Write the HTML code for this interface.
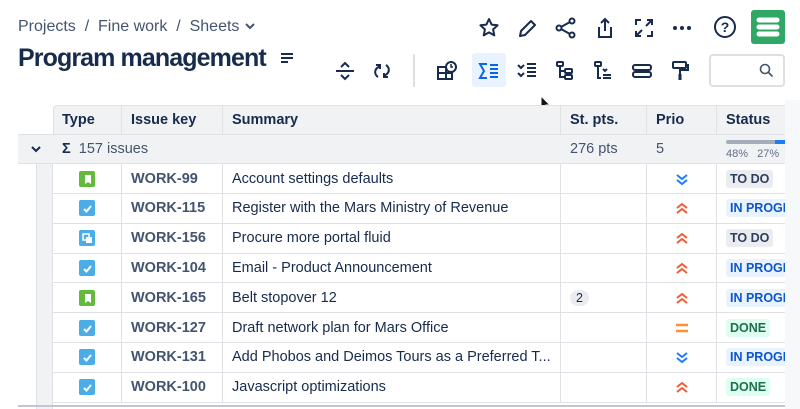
<!DOCTYPE html><html><head><style>
*{box-sizing:border-box;margin:0;padding:0}
body{width:800px;height:409px;overflow:hidden;background:#fff;font-family:"Liberation Sans",sans-serif;position:relative;color:#172b4d}
.a{position:absolute}
.ic{position:absolute;width:24px;height:24px}
.cell{position:absolute;height:30px;display:flex;align-items:center;font-size:14.5px;border-right:1px solid #dfe1e6;border-bottom:1px solid #dfe1e6}
.key{color:#44546f;font-weight:bold}
.lz{font-size:12.5px;font-weight:bold;padding:2px 4px;border-radius:3px;white-space:nowrap}
.todo{background:#ebecf0;color:#2c3e5d}.prog{background:#e9f2ff;color:#0c55cf}.done{background:#dcfff1;color:#216e4e}
</style></head><body>
<div class="a" style="left:18px;top:18px;font-size:16px;color:#44546f">Projects &nbsp;/&nbsp; Fine work &nbsp;/&nbsp; Sheets <svg width="12" height="10"><path d="M2 3l4 4 4-4" stroke="#44546f" stroke-width="2" fill="none"/></svg></div>
<div class="a" style="left:18px;top:44px;font-size:25px;font-weight:bold;color:#172b4d;letter-spacing:-0.9px;white-space:nowrap">Program management</div>
<svg class="a" style="left:280px;top:52px" width="14" height="12"><path d="M1 2h12M1 6h12M1 10h7" stroke="#172b4d" stroke-width="2"/></svg>
<svg class="ic" style="left:477px;top:16px" viewBox="0 0 24 24"><path d="M12 3l2.6 5.6 6 .7-4.5 4.1 1.2 6L12 16.4 6.7 19.4l1.2-6L3.4 9.3l6-.7z" fill="none" stroke="#172b4d" stroke-width="2" stroke-linejoin="round"/></svg>
<svg class="ic" style="left:516px;top:16px" viewBox="0 0 24 24"><path d="M4 20l1-5L15 5l4 4L9 19z" fill="none" stroke="#172b4d" stroke-width="2" stroke-linejoin="round"/></svg>
<svg class="ic" style="left:554px;top:16px" viewBox="0 0 24 24"><circle cx="18" cy="5" r="2.5" fill="none" stroke="#172b4d" stroke-width="2"/><circle cx="5" cy="12" r="2.5" fill="none" stroke="#172b4d" stroke-width="2"/><circle cx="18" cy="19" r="2.5" fill="none" stroke="#172b4d" stroke-width="2"/><path d="M7 11l9-5M7 13l9 5" stroke="#172b4d" stroke-width="2"/></svg>
<svg class="ic" style="left:593px;top:16px" viewBox="0 0 24 24"><path d="M12 15V3M8 7l4-4 4 4M6 11v10h12V11" fill="none" stroke="#172b4d" stroke-width="2"/></svg>
<svg class="ic" style="left:632px;top:16px" viewBox="0 0 24 24"><path d="M4 9V4h5M15 4h5v5M20 15v5h-5M9 20H4v-5M5 19l5-5M19 5l-5 5" fill="none" stroke="#172b4d" stroke-width="2"/></svg>
<svg class="ic" style="left:670px;top:16px" viewBox="0 0 24 24"><circle cx="5" cy="12" r="2" fill="#172b4d"/><circle cx="12" cy="12" r="2" fill="#172b4d"/><circle cx="19" cy="12" r="2" fill="#172b4d"/></svg>
<svg class="ic" style="left:713px;top:15px" viewBox="0 0 24 24"><circle cx="12" cy="12" r="10" fill="none" stroke="#172b4d" stroke-width="2"/><text x="12" y="17" font-size="14" font-weight="bold" text-anchor="middle" fill="#172b4d" font-family="Liberation Sans">?</text></svg>
<div class="a" style="left:751px;top:10px;width:34px;height:34px;background:#2fa866;border-radius:3px"><svg width="34" height="34"><path d="M8 10h18M8 17h18M8 24h18" stroke="#fff" stroke-width="5" stroke-linecap="round"/></svg></div>
<svg class="ic" style="left:333px;top:59px" viewBox="0 0 24 24"><path d="M3 12h18M8 8l4-4 4 4M8 16l4 4 4-4" fill="none" stroke="#172b4d" stroke-width="2"/></svg>
<svg class="ic" style="left:370px;top:59px" viewBox="0 0 24 24"><path d="M8 18c-3-2-4-6-1-9l3-2M6 6h4v4M16 6c3 2 4 6 1 9l-3 2M18 18h-4v-4" fill="none" stroke="#172b4d" stroke-width="2"/></svg>
<div class="a" style="left:413px;top:54px;width:2px;height:33px;background:#dcdfe4"></div>
<svg class="ic" style="left:435px;top:59px" viewBox="0 0 24 24"><path d="M3 8h8v12H3zM3 14h14v6H11" fill="none" stroke="#172b4d" stroke-width="2"/><circle cx="16" cy="8" r="5" fill="#fff" stroke="#172b4d" stroke-width="2"/><path d="M16 5v3h2" stroke="#172b4d" stroke-width="1.5" fill="none"/></svg>
<div class="a" style="left:472px;top:53px;width:34px;height:34px;background:#e9f2ff;border-radius:3px"></div>
<svg class="ic" style="left:477px;top:59px" viewBox="0 0 24 24"><path d="M10 5H3l4 7-4 7h7M13 6h8M13 10h8M13 14h8M13 18h8" fill="none" stroke="#0c66e4" stroke-width="2"/></svg>
<svg class="ic" style="left:515px;top:59px" viewBox="0 0 24 24"><path d="M3 6l3 3 3-3M3 14l3 3 3-3M12 5h9M12 9h9M12 13h9M12 17h9" fill="none" stroke="#172b4d" stroke-width="2"/></svg>
<svg class="ic" style="left:553px;top:59px" viewBox="0 0 24 24"><rect x="4" y="3" width="6" height="4" rx="1" fill="none" stroke="#172b4d" stroke-width="2"/><path d="M7 7v11h4M7 12h4" fill="none" stroke="#172b4d" stroke-width="2"/><rect x="12" y="10" width="7" height="4" rx="1" fill="none" stroke="#172b4d" stroke-width="2"/><rect x="12" y="16" width="7" height="4" rx="1" fill="none" stroke="#172b4d" stroke-width="2"/></svg>
<svg class="ic" style="left:591px;top:59px" viewBox="0 0 24 24"><rect x="4" y="3" width="6" height="4" rx="1" fill="none" stroke="#172b4d" stroke-width="2"/><path d="M7 7v12h3M12 10l2 2 2-2M12 16h8M12 19h8" fill="none" stroke="#172b4d" stroke-width="2"/></svg>
<svg class="ic" style="left:630px;top:59px" viewBox="0 0 24 24"><rect x="3" y="6" width="18" height="5" rx="2" fill="none" stroke="#172b4d" stroke-width="2"/><rect x="3" y="13" width="18" height="5" rx="2" fill="none" stroke="#172b4d" stroke-width="2"/></svg>
<svg class="ic" style="left:668px;top:59px" viewBox="0 0 24 24"><rect x="5" y="3" width="13" height="6" rx="1" fill="none" stroke="#172b4d" stroke-width="2"/><path d="M18 6h2v5h-8v4" fill="none" stroke="#172b4d" stroke-width="2"/><rect x="10.5" y="15" width="3" height="6" fill="#172b4d"/></svg>
<div class="a" style="left:709px;top:54px;width:76px;height:33px;border:2px solid #dcdfe4;border-radius:4px"></div>
<svg class="a" style="left:759px;top:63px" width="15" height="15"><circle cx="6" cy="6" r="4.5" fill="none" stroke="#44546f" stroke-width="1.6"/><path d="M9.5 9.5l4 4" stroke="#44546f" stroke-width="1.6"/></svg>
<svg class="a" style="left:540px;top:95px" width="12" height="18"><path d="M1 1v13l3-3 3 6 2-1-3-6h4z" fill="#111" stroke="#fff" stroke-width="1"/></svg>
<div class="a" style="left:53px;top:105px;width:740px;height:29px;background:#f1f2f4;border-top:1px solid #dfe1e6;border-left:1px solid #dfe1e6;border-radius:4px 0 0 0"></div>
<div class="a" style="left:18px;top:134px;width:775px;height:30px;background:#f1f2f4;border-top:1px solid #dfe1e6;border-bottom:1px solid #dfe1e6"></div>
<div class="a" style="left:36px;top:164px;width:17px;height:245px;background:#f1f2f4;border-left:1px solid #dfe1e6;border-right:1px solid #dfe1e6"></div>
<div id="hd"></div>
<div class="a" style="left:785px;top:100px;width:15px;height:309px;background:#f7f8f9"></div>
<div class="a" style="left:18px;top:405px;width:767px;height:2px;background:#c1c7d0"></div>
<script>
var cols=[[53,122],[122,223],[223,561],[561,647],[647,717],[717,800]];
var h=['Type','Issue key','Summary','St. pts.','Prio','Status'];
var o='';
h.forEach(function(t,i){o+='<div class="cell" style="left:'+cols[i][0]+'px;top:105px;width:'+(cols[i][1]-cols[i][0])+'px;height:29px;padding-left:9px;font-weight:bold;font-size:14.5px;border-bottom:none">'+t+'</div>';});
o+='<svg class="a" style="left:30px;top:144px" width="12" height="10"><path d="M2 3l4 4 4-4" stroke="#172b4d" stroke-width="2" fill="none"/></svg>';
o+='<div class="a" style="left:62px;top:141px;font-size:14.5px;color:#44546f"><b style="color:#172b4d">&Sigma;</b>&nbsp; 157 issues</div>';
o+='<div class="a" style="left:570px;top:141px;font-size:14.5px;color:#44546f">276 pts</div>';
o+='<div class="a" style="left:656px;top:141px;font-size:14.5px;color:#44546f">5</div>';
o+='<div class="a" style="left:726px;top:140px;width:70px;height:4px;background:#a5adba;border-radius:2px"></div><div class="a" style="left:775px;top:140px;width:20px;height:4px;background:#1d7afc"></div>';
o+='<div class="a" style="left:726px;top:148px;font-size:11px;color:#626f86">48% &nbsp;&nbsp;27%</div>';
var rows=[['s','WORK-99','Account settings defaults','','d','todo','TO DO'],['t','WORK-115','Register with the Mars Ministry of Revenue','','h','prog','IN PROGRESS'],['u','WORK-156','Procure more portal fluid','','h','todo','TO DO'],['t','WORK-104','Email - Product Announcement','','h','prog','IN PROGRESS'],['s','WORK-165','Belt stopover 12','2','h','prog','IN PROGRESS'],['t','WORK-127','Draft network plan for Mars Office','','m','done','DONE'],['t','WORK-131','Add Phobos and Deimos Tours as a Preferred T...','','d','prog','IN PROGRESS'],['t','WORK-100','Javascript optimizations','','h','done','DONE']];
rows.forEach(function(r,k){var y=164+k*29.8;
 for(var i=0;i<6;i++){var c='',pad='9px',js='flex-start';
  if(i==0){js='center';pad='0';var col=r[0]=='s'?'#63ba3c':'#4bade8';
   var inner=r[0]=='s'?'<path d="M6 4h6v9l-3-2-3 2z" fill="#fff"/>':r[0]=='t'?'<path d="M5 9l2.5 2.5L12 6" stroke="#fff" stroke-width="2" fill="none"/>':'<rect x="4" y="4" width="6" height="6" fill="none" stroke="#fff" stroke-width="1.5"/><rect x="7" y="7" width="6" height="6" fill="#fff"/>';
   c='<svg width="16" height="16"><rect width="16" height="16" rx="2" fill="'+col+'"/>'+inner+'</svg>';}
  if(i==1)c='<span class="key">'+r[1]+'</span>';
  if(i==2)c=r[2];
  if(i==3&&r[3])c='<span style="background:#ebecf0;border-radius:10px;padding:1px 6px;font-size:12.5px">2</span>';
  if(i==4){js='center';pad='0';c=r[4]=='d'?'<svg width="16" height="16"><path d="M3 4l5 4 5-4M3 9l5 4 5-4" stroke="#1d7afc" stroke-width="2" fill="none"/></svg>':r[4]=='h'?'<svg width="16" height="16"><path d="M3 8l5-4 5 4M3 13l5-4 5 4" stroke="#f15b36" stroke-width="2" fill="none"/></svg>':'<svg width="16" height="16"><path d="M2 5h12" stroke="#f79232" stroke-width="2.5"/><path d="M2 11h12" stroke="#f79232" stroke-width="2.5"/></svg>';}
  if(i==5)c='<span class="lz '+r[5]+'">'+r[6]+'</span>';
  o+='<div class="cell" style="left:'+cols[i][0]+'px;top:'+y+'px;width:'+(cols[i][1]-cols[i][0])+'px;padding-left:'+pad+';justify-content:'+js+';overflow:hidden;white-space:nowrap">'+c+'</div>';}
});
document.getElementById('hd').outerHTML=o;
</script>
</body></html>
